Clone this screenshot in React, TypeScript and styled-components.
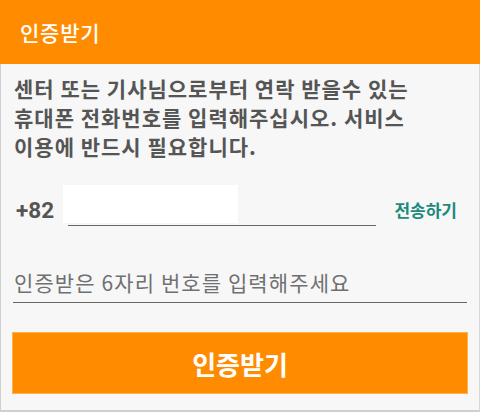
import styled, { createGlobalStyle } from "styled-components";

const GlobalStyle = createGlobalStyle`
  html, body {
    margin: 0;
    padding: 0;
    background: #f7f7f7;
  }
  * {
    box-sizing: border-box;
  }
`;

const Frame = styled.div`
  width: 480px;
  height: 412px;
  display: flex;
  flex-direction: column;
  background: #f7f7f7;
  border-left: 1px solid #cfcfcf;
  border-right: 1px solid #d8d8d8;
  border-bottom: 2px solid #cfcfcf;
  font-family: "Noto Sans CJK KR", "Noto Sans", sans-serif;
`;

const Header = styled.div`
  height: 64px;
  margin: 0 -1px;
  display: flex;
  align-items: center;
  padding-left: 20px;
  background: #ff8c00;
  color: #fff;
  font-size: 21px;
  font-weight: 500;
  letter-spacing: 0.8px;
`;

const Message = styled.p`
  margin: 10px 0 0 13px;
  font-size: 21px;
  font-weight: 700;
  line-height: 29px;
  color: #555;
  letter-spacing: 1px;
  white-space: nowrap;
`;

const PhoneRow = styled.div`
  display: flex;
  align-items: center;
  height: 44px;
  margin-top: 24px;
  padding-left: 15px;
  padding-right: 22px;
`;

const CountryCode = styled.span`
  font-family: "Roboto", "Noto Sans CJK KR", sans-serif;
  font-size: 22.5px;
  font-weight: 700;
  color: #555;
  padding-top: 6px;
`;

const PhoneField = styled.div`
  width: 308px;
  height: 41px;
  margin-left: 14px;
  align-self: flex-start;
  border-bottom: 1.5px solid #666;
`;

const MaskedNumber = styled.div`
  width: 175px;
  height: 38px;
  margin-left: -5px;
  background: #fff;
`;

const SendLink = styled.span`
  margin-left: auto;
  font-size: 17px;
  font-weight: 700;
  color: #1e8a7b;
  padding-top: 4px;
`;

const CodeInput = styled.input`
  display: block;
  margin: 33px 12px 0 12px;
  height: 41px;
  padding: 0 0 0 1px;
  border: none;
  border-bottom: 1.5px solid #666;
  background: transparent;
  font-family: "Noto Sans CJK KR", "Noto Sans", sans-serif;
  font-size: 21px;
  letter-spacing: 1.1px;
  color: #444;
  outline: none;
  &::placeholder {
    color: #707070;
  }
`;

const SubmitButton = styled.button`
  margin: 29px 11px 0 11px;
  height: 62px;
  border: 1px solid #ffb04d;
  background: #ff8c00;
  color: #fff;
  font-family: "Noto Sans CJK KR", "Noto Sans", sans-serif;
  font-size: 26px;
  font-weight: 700;
  cursor: pointer;
`;

function App() {
  return (
    <>
      <GlobalStyle />
      <Frame>
        <Header>인증받기</Header>
        <Message>
          센터 또는 기사님으로부터 연락 받을수 있는
          <br />
          휴대폰 전화번호를 입력해주십시오. 서비스
          <br />
          이용에 반드시 필요합니다.
        </Message>
        <PhoneRow>
          <CountryCode>+82</CountryCode>
          <PhoneField>
            <MaskedNumber />
          </PhoneField>
          <SendLink>전송하기</SendLink>
        </PhoneRow>
        <CodeInput placeholder="인증받은 6자리 번호를 입력해주세요" />
        <SubmitButton>인증받기</SubmitButton>
      </Frame>
    </>
  );
}

export default App;
